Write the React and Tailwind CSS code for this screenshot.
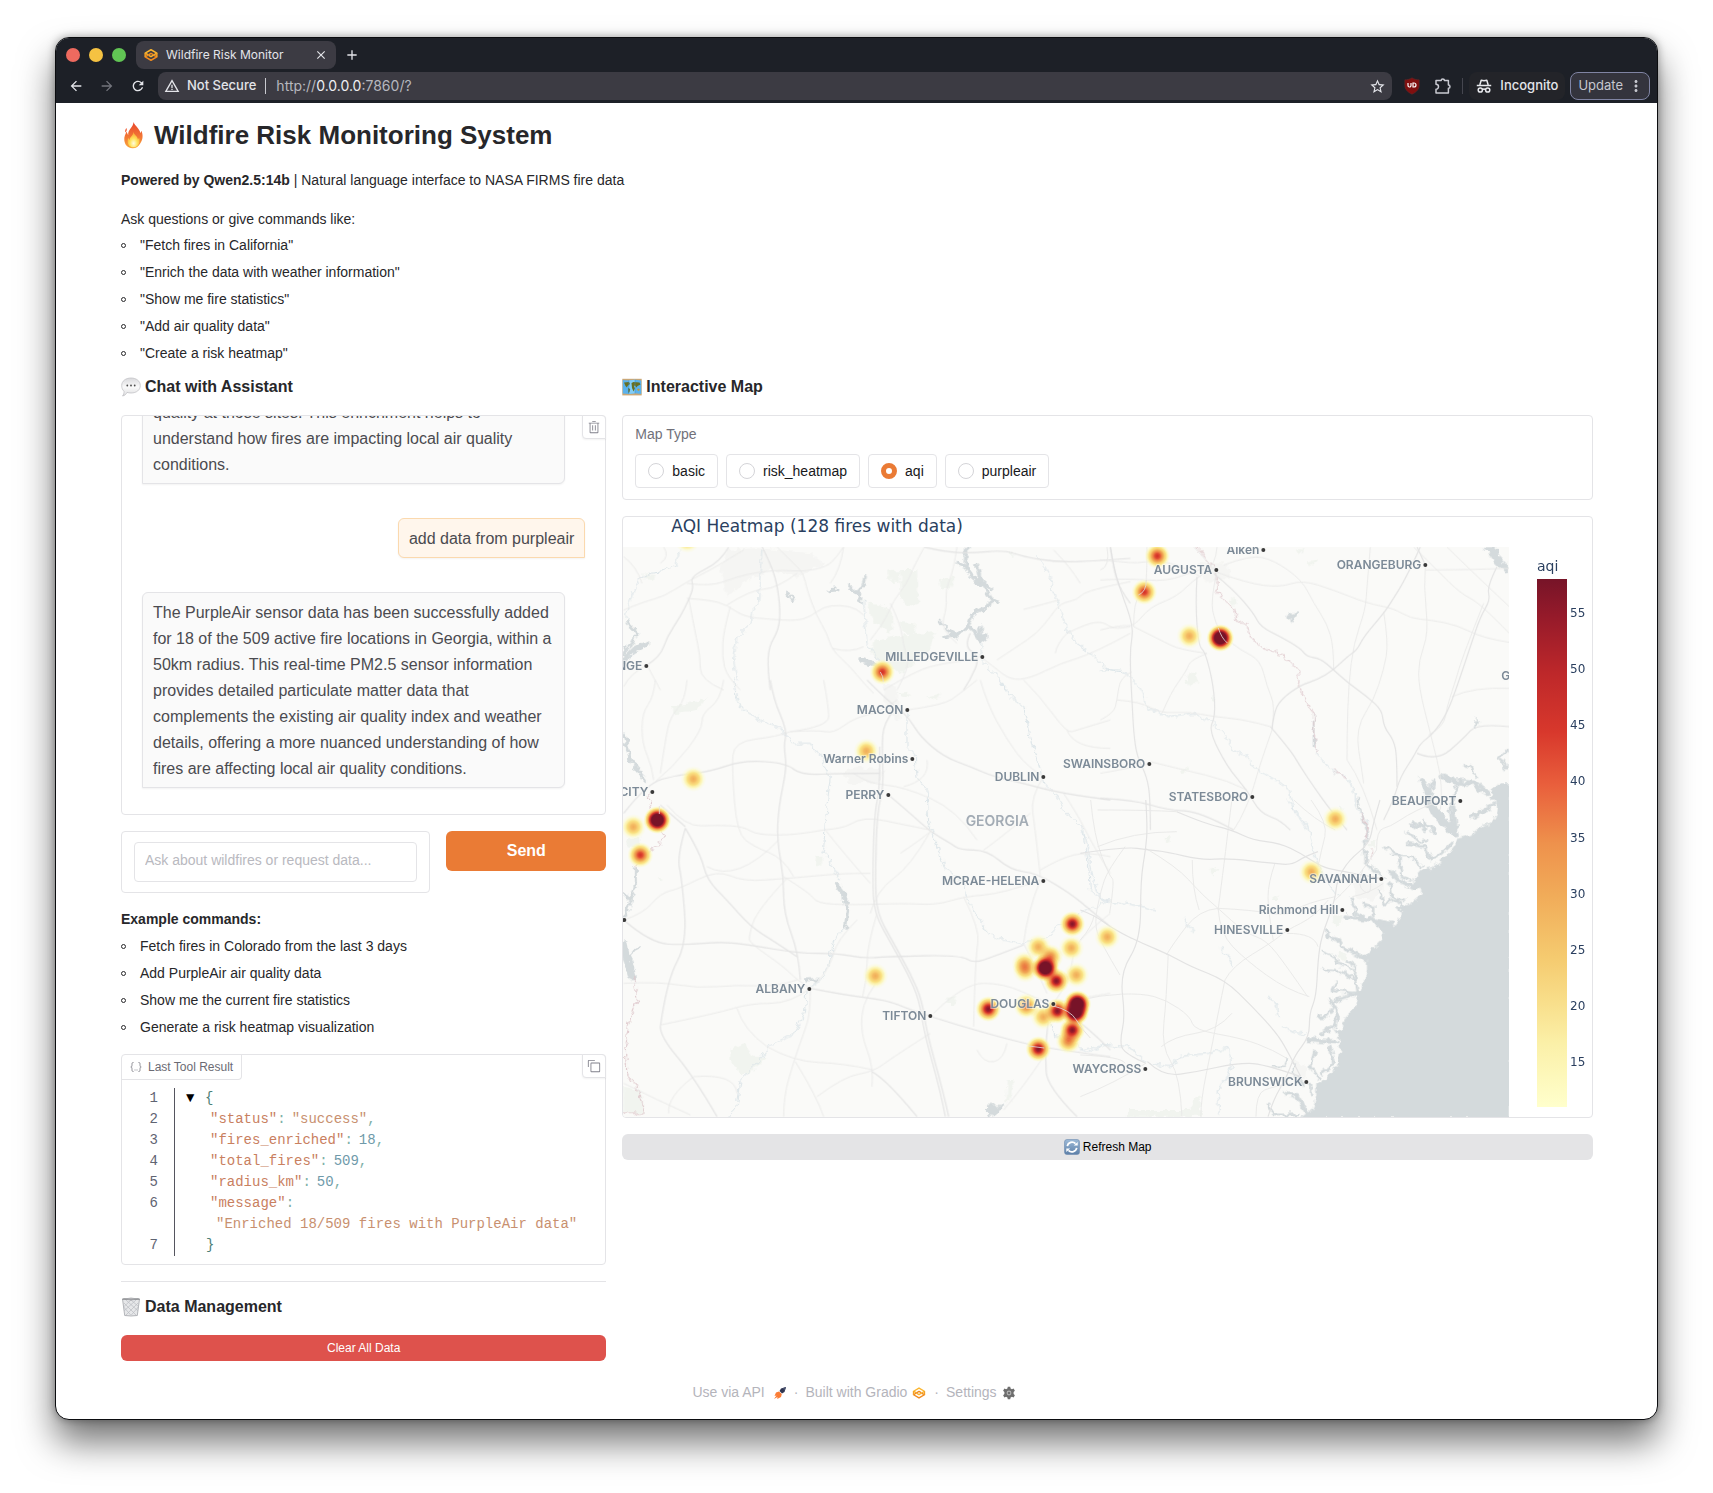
import React, { useState } from "react";
import {
  MdArrowBack,
  MdArrowForward,
  MdRefresh,
  MdWarningAmber,
  MdStarBorder,
  MdMoreVert,
  MdClose,
  MdAdd,
} from "react-icons/md";

/* ---------- icons ---------- */

const FlameIcon = () => (
  <svg viewBox="0 0 24 32" className="h-7 w-[25px] shrink-0" aria-hidden="true">
    <defs>
      <linearGradient id="flameOuter" x1="0" y1="0" x2="0" y2="1">
        <stop offset="0" stopColor="#e8452c" />
        <stop offset="0.6" stopColor="#f37a35" />
        <stop offset="1" stopColor="#f9a83c" />
      </linearGradient>
      <radialGradient id="flameInner" cx="0.5" cy="0.75" r="0.6">
        <stop offset="0" stopColor="#fffbe0" />
        <stop offset="0.5" stopColor="#ffe45e" />
        <stop offset="1" stopColor="#fbb03b" />
      </radialGradient>
    </defs>
    <path d="M12 1c1 4 7 7 8 13l1-3c2 4 2 10-1 14-2 4-5 6-9 6-6 0-9-4-9.500-9C1 18 3 15 4 12c1 2 1 3 2 4C5 10 12 7 12 1z" fill="url(#flameOuter)" />
    <path d="M4 8c-1 1-2 3-1.500 5C4 12 5 10 4 8z" fill="#f0603a" />
    <path d="M12 12c0 4 5 5 5 9l1.500-2c1.500 5-1 11-6.500 11s-8-5-6-11l1.500 3C7.500 18 12 17 12 12z" fill="url(#flameInner)" />
  </svg>
);

const SpeechIcon = () => (
  <svg viewBox="0 0 20 20" className="size-5 shrink-0" aria-hidden="true">
    <defs>
      <linearGradient id="speechFill" x1="0" y1="0" x2="0" y2="1">
        <stop offset="0" stopColor="#d9d9dc" />
        <stop offset="0.5" stopColor="#fafafa" />
        <stop offset="1" stopColor="#dedee0" />
      </linearGradient>
    </defs>
    <path d="M10 1c5.300 0 9.300 3 9.300 7.500S15.500 16 10 16c-1.500 0-2.800-.2-4-.6C5 17.500 3.500 18.600 1.500 19c1.200-1.200 1.600-3 1.500-4.800C1.500 13 .7 11 .7 8.500.7 4 4.700 1 10 1z" fill="url(#speechFill)" stroke="#bcbcc0" strokeWidth="0.7" />
    <circle cx="6.300" cy="8.500" r="0.9" fill="#4a4a4a" />
    <circle cx="10" cy="8.500" r="0.9" fill="#4a4a4a" />
    <circle cx="13.700" cy="8.500" r="0.9" fill="#4a4a4a" />
  </svg>
);

const WorldMapIcon = () => (
  <svg viewBox="0 0 20 18" className="h-[18px] w-5 shrink-0" aria-hidden="true">
    <rect x="0.300" y="0.800" width="19.400" height="16.600" fill="#c9a777" />
    <path d="M.8 2l6 .6 6.200-.8 6.200.8V16l-6.200-.7-6.200.7-6-.6z" fill="#5ab2ec" />
    <path d="M7 2.500l6-.7v13.500l-6 .7z" fill="#83cdf6" />
    <path d="M2 4.500l5-.5 1 2-2.500 2L5 9.500 3.500 8zM6 10l2.200 1-.7 3-1.200 1zM9.500 5l2-1 6 .5 1 2-3 1.500-1 1.500-1.500-2-1 .5 1 2.500-1.500 3-1.500-3.500z" fill="#676f22" />
    <path d="M15 11l2-.5 1 1.500-2 1z" fill="#c09a3a" />
    <path d="M6.900 2.500V16M13 2v13.300" stroke="#3f8cc4" strokeWidth="0.500" />
  </svg>
);

const BasketIcon = () => (
  <svg viewBox="0 0 20 20" className="size-5 shrink-0" aria-hidden="true">
    <path d="M1.500 2h17l-2.200 16.500q-6.300 1-12.600 0z" fill="#e6e7e9" stroke="#a2a5aa" strokeWidth="0.800" />
    <path d="M3 6l12 12M5 3l12 11M10 3l8 7M2.700 10l7 8M17 6L5 18M15 3L3 14M10 3L2.500 10M17.300 10l-7 8" stroke="#b9bcc1" strokeWidth="0.700" />
    <ellipse cx="10" cy="2" rx="9" ry="1.200" fill="#77797d" />
    <ellipse cx="10" cy="1.900" rx="7.600" ry="0.600" fill="#c9cacd" />
  </svg>
);

const SyncBadgeIcon = () => (
  <svg viewBox="0 0 16 16" className="size-4 shrink-0" aria-hidden="true">
    <defs>
      <linearGradient id="syncFill" x1="0" y1="0" x2="0" y2="1">
        <stop offset="0" stopColor="#9dbad8" />
        <stop offset="1" stopColor="#5c7fa8" />
      </linearGradient>
    </defs>
    <rect x="0.500" y="0.500" width="15" height="15" rx="2.500" fill="url(#syncFill)" stroke="#6d8bb0" strokeWidth="0.600" />
    <path d="M3.300 7.200a4.800 4.800 0 0 1 8.200-2.500M12.700 8.800a4.800 4.800 0 0 1-8.200 2.500" fill="none" stroke="#fff" strokeWidth="1.700" />
    <path d="M9.800 6.600h3.900V2.900zM6.200 9.400H2.300v3.700z" fill="#fff" />
  </svg>
);

const GradioIcon = ({ className }) => (
  <svg viewBox="0 0 24 22" className={className} strokeWidth="2.600" strokeLinejoin="round" fill="none" aria-hidden="true">
    <path d="M7 10.500L2 7.800 12 2l10 5.800-10 6-4-2.300" stroke="#fbb52e" />
    <path d="M17 11.500l5 2.700L12 20 2 14.200l10-6 4 2.300" stroke="#f08a1e" />
    <path d="M2 7.800v6.400M22 7.800v6.400" stroke="#f5a024" />
  </svg>
);

const RocketIcon = () => (
  <svg viewBox="0 0 14 14" className="size-3.5 shrink-0" aria-hidden="true">
    <path d="M13 1L8 2.500 6.500 5 9 7.500 11.500 6z" fill="#2f3550" />
    <path d="M6 5.500L3 6.500 1.500 10l2-.5L1 13l3.500-2-.3 2L8 11l.8-3z" fill="#fb7d36" />
    <path d="M13 1L9.500 2.200 11.800 4.500z" fill="#4a5270" />
  </svg>
);

const GearIcon = () => (
  <svg viewBox="0 0 14 14" className="size-3.5 shrink-0" aria-hidden="true">
    <path
      d="M5.800.8h2.400l.4 1.700 1.300.7 1.700-.6 1.300 2.100-1.300 1.200v2.200l1.300 1.200-1.300 2.100-1.700-.6-1.300.7-.4 1.700H5.800l-.4-1.700-1.300-.7-1.700.6-1.300-2.100 1.300-1.200V5.900L1.100 4.700l1.300-2.100 1.700.6 1.300-.7z"
      fill="#6e6e6e"
    />
    <circle cx="7" cy="7" r="2.400" fill="#b5b5b5" />
    <circle cx="7" cy="7" r="1.300" fill="#6e6e6e" />
  </svg>
);

const TrashIcon = () => (
  <svg viewBox="0 0 32 32" className="size-3.5" fill="currentColor" aria-hidden="true">
    <path d="M12 12h2v12h-2zM18 12h2v12h-2zM4 6v2h2v20a2 2 0 0 0 2 2h16a2 2 0 0 0 2-2V8h2V6zm4 22V8h16v20zM12 2h8v2h-8z" />
  </svg>
);

const CopyIcon = () => (
  <svg viewBox="0 0 32 32" className="size-3.5" fill="currentColor" aria-hidden="true">
    <path d="M28 10v18H10V10h18m0-2H10a2 2 0 0 0-2 2v18a2 2 0 0 0 2 2h18a2 2 0 0 0 2-2V10a2 2 0 0 0-2-2Z" />
    <path d="M4 18H2V4a2 2 0 0 1 2-2h14v2H4Z" />
  </svg>
);

const BracesIcon = () => (
  <svg viewBox="0 0 12 12" className="size-3 shrink-0" fill="none" stroke="#8a8a92" aria-hidden="true">
    <path d="M3.500 1.500c-1.500 0-1.500.5-1.500 2S1.700 6 .8 6c.9 0 1.200 1 1.200 2.500s0 2 1.500 2M8.500 1.500c1.500 0 1.500.5 1.500 2S10.300 6 11.200 6c-.9 0-1.200 1-1.200 2.500s0 2-1.500 2" />
    <path d="M4.500 9h1M6.500 9h1" />
  </svg>
);

const IncognitoIcon = () => (
  <svg viewBox="0 0 16 16" className="size-4" fill="none" stroke="#e8e9ed" strokeWidth="1.500" aria-hidden="true">
    <path d="M3.800 7L5.200 2.200l2.800.6 2.800-.6L12.200 7" strokeLinejoin="round" />
    <path d="M.8 7.500h14.400" />
    <circle cx="4.300" cy="12" r="2.100" />
    <circle cx="11.700" cy="12" r="2.100" />
    <path d="M6.300 11.500q1.700-1 3.400 0" />
  </svg>
);

const PuzzleIcon = () => (
  <svg viewBox="0 0 18 18" className="size-[18px]" fill="none" stroke="#c9cad2" strokeWidth="1.500" strokeLinejoin="round" aria-hidden="true">
    <path d="M2 3.500h5.200a1.600 1.600 0 0 1 3.200 0h4v4.600a1.600 1.600 0 0 1 0 3.200V16H2v-3.800a2.500 2.500 0 0 0 0-5z" />
  </svg>
);

const ShieldIcon = () => (
  <svg viewBox="0 0 16 18" className="h-[18px] w-4" aria-hidden="true">
    <path d="M8 .8c2 1.400 4.600 2 7.200 2v5.400c0 4-2.600 7-7.200 9-4.600-2-7.200-5-7.200-9V2.800c2.600 0 5.200-.6 7.200-2z" fill="#800f0f" stroke="#5c2a2c" strokeWidth="0.600" />
    <path d="M4 6v2.500a1.500 1.500 0 0 0 3 0V6M9 6v4h1a2 2 0 0 0 0-4z" fill="none" stroke="#fff" strokeWidth="1.200" />
  </svg>
);

/* ---------- map drawing ---------- */

function smooth(line) {
  const p = line.split(" ").map((s) => s.split(",").map(Number));
  if (p.length < 3) return "M" + line.replace(" ", "L");
  let d = `M${p[0]}`;
  for (let i = 1; i < p.length - 1; i++) {
    const end = i === p.length - 2 ? p[i + 1] : [(p[i][0] + p[i + 1][0]) / 2, (p[i][1] + p[i + 1][1]) / 2];
    d += `Q${p[i]} ${end}`;
  }
  return d;
}

const tiles = [
  {
    place: "translate(610 370) scale(0.3333)",
    roads: [
      "40,720 100,695 160,680 230,635 300,600 350,570 400,540",
      "230,640 300,650 380,620 450,605 520,600 580,605 650,590 680,560 700,530",
      "500,531 550,580 580,610 590,660 620,740 650,790 665,840 720,890 760,940 790,970",
      "235,685 255,790 270,860 270,930 340,960",
      "230,685 300,690 350,705 400,740 480,748 560,752 600,740 640,710 690,705 740,715 760,735",
      "360,710 340,780 335,860 350,920 390,960",
      "350,705 420,660 500,655 560,610",
      "700,531 690,600 660,640",
      "940,535 910,590 890,640 850,690 820,760 780,810",
      "1040,531 1030,600 1005,660 1010,710 990,780 1040,820",
      "840,700 870,760 880,830 900,890 860,960",
      "1160,870 1220,830 1280,790 1320,740 1350,700 1400,690 1430,660 1560,635",
      "1110,860 1150,890 1200,930 1260,925 1350,880 1450,850 1560,790",
      "1240,718 1310,700 1345,690",
      "1370,790 1430,760 1480,755 1510,780 1560,770",
      "1370,790 1340,820 1335,850",
      "1330,540 1380,590 1410,640",
      "40,560 80,590 95,640",
      "160,531 180,560 150,580",
      "110,885 60,910 40,950",
      "820,960 920,900 1000,880 1080,870 1110,860",
      "665,835 720,850 760,830",
      "110,885 150,960",
    ],
    mains: [
      "455,530 480,580 500,640 510,720 505,780 475,830 472,900 480,960",
      "110,885 150,860 170,800 210,740 235,690 250,650 240,620 330,575 355,531",
      "940,531 1000,545 1080,550 1180,540 1240,560 1330,575 1430,575 1560,565",
      "1500,531 1510,600 1530,660 1560,700",
      "1080,790 1060,830 1110,860 1080,930 1060,960",
    ],
    rivers: [
      "210,540 195,580 160,605 120,610 85,630 70,660 55,700 45,740 60,770 85,790",
      "455,540 450,600 445,700 425,720 420,760 380,800 370,870 380,930",
      "1280,560 1320,620 1325,660 1345,700 1370,780 1400,820 1440,850 1490,900 1540,910",
      "760,690 765,760 770,820 800,860 815,900",
      "1110,810 1115,870 1160,920 1190,960",
    ],
    water: [
      [11, "1070,531 1065,580 1085,620 1120,650 1145,690 1140,705 1090,730 1070,770 1040,800 1010,780"],
      [9, "1040,580 1065,590"], [12, "1100,590 1110,630 1140,655"], [7, "1145,690 1165,695"],
      [14, "1070,770 1090,780 1110,810 1125,800"], [9, "1110,770 1112,805"], [9, "1000,800 1040,795"], [7, "990,755 1015,785"],
      [9, "765,620 755,650 735,670 755,695"], [9, "715,645 745,670"], [9, "530,670 550,690"], [9, "655,662 680,660"],
      [12, "750,870 800,885"], [8, "50,760 80,790 60,830 40,850"], [14, "110,820 70,840 40,870"], [8, "45,830 40,890"],
    ],
    parks: [
      "870,600 920,600 925,700 890,710 870,680", "830,605 870,600 865,635 840,635",
      "790,810 850,800 980,785 950,850 870,910 830,890 780,850",
      "770,700 830,710 850,750 840,790 790,760", "985,635 1030,620 1020,655 990,660",
      "870,755 910,760 920,795 880,790", "100,610 135,615 130,630 100,628", "1190,545 1215,545 1205,562",
    ],
    urban: ["350,540 440,535 600,550 640,580 560,620 480,600 400,640 350,680 330,600"],
    border: [],
  },
  {
    place: "translate(1100 500) scale(0.3333)",
    roads: [
      "0,180 60,185 110,190 170,180 250,200 300,230",
      "0,240 80,235 200,245 290,210 345,200 350,141",
      "0,390 60,375 100,380 150,320 230,290 290,230 345,200",
      "100,380 180,420 240,450 320,460",
      "350,215 330,300 345,370 370,410 420,450 480,480 500,560 525,620 515,680",
      "345,215 440,250 540,262 605,240 700,270 800,310 880,325 930,355 990,360 1070,375 1150,415 1227,427",
      "370,195 450,165 520,180 605,240 640,310 680,370 700,440 700,510",
      "810,141 800,260 795,330 760,430 745,550 740,700 740,780",
      "740,780 790,850 830,990",
      "975,195 970,260 985,400 955,480 955,560 990,700 1010,780",
      "975,210 1100,210 1227,205",
      "940,141 1010,210 1080,280 1140,310 1227,400",
      "1040,141 1120,220 1227,320",
      "1150,310 1090,460 1060,560 1040,620 1030,680 985,705",
      "850,335 865,430 850,510 820,600 780,660 770,720 780,780 790,850",
      "1055,590 1120,560 1227,565",
      "1010,780 1030,860 1020,930",
      "0,660 40,640 50,600 60,530 95,515",
      "50,600 120,605 180,640 260,635 340,650 440,660 510,680",
      "185,640 210,580 260,510 270,480 320,460",
      "515,690 480,790 460,860 450,890 420,960 400,990",
      "150,785 250,810 380,840 440,870",
      "0,820 60,810 150,790",
      "140,141 140,200 135,280 100,300 100,380",
      "20,141 30,200 0,210",
      "345,215 300,160 280,141",
    ],
    mains: [
      "30,141 40,200 60,270 100,380 90,440 90,515 95,600 100,700 110,770 140,830 150,900 150,990",
      "290,230 285,310 295,440 315,455 340,560 345,650 325,690 380,800 440,870 480,940 540,960 570,990",
      "340,220 400,270 460,340 480,380 540,410 600,445 620,470 660,475 700,510 745,550 800,590 845,630 850,680 880,720 890,770 890,860",
      "960,141 920,230 870,310 850,340 790,410 770,450 740,470 700,510 650,540 600,555 540,600 520,640 515,690",
      "510,680 570,750 600,800 640,860 690,930 740,990",
      "1190,200 1160,260 1170,300 1140,350 1110,440 1070,560 1040,640 1000,700 960,730 940,770 900,830 880,900 850,960",
      "1227,680 1130,670 1090,715 1010,785 950,760",
      "0,895 100,900 200,930 300,935 400,990",
      "950,141 975,195",
    ],
    rivers: [
      "0,510 60,510 100,540 130,580 135,620 200,650 280,640 340,670 370,700 400,750 440,770 470,810 530,840 570,870 580,930 620,990",
      "640,640 640,700 650,760 690,810 740,830 765,880 765,920 800,960 805,990",
    ],
    water: [
      [14, "565,352 585,345"], [8, "590,335 580,360"], [8, "1120,665 1135,668"], [7, "1130,655 1128,680"],
      [16, "1025,828 1060,845 1120,850 1160,880"], [20, "965,840 985,880 990,920 1030,960 1060,990"], [10, "1000,840 985,890"],
      [7, "1090,795 1110,800 1130,830"], [7, "1220,750 1195,775 1215,790 1215,810"], [12, "1120,950 1180,910"],
      [12, "940,970 975,990"], [10, "1070,860 1050,930 1060,990"], [6, "640,660 640,740"],
    ],
    parks: ["255,530 280,515 295,550 265,555", "390,300 405,290 410,310 395,315", "335,590 345,590 345,605 335,605", "590,150 610,145 605,160", "625,185 650,175 645,190 630,195", "245,805 265,800 250,825", "715,920 735,925 725,935"],
    urban: ["290,190 380,190 390,230 320,250"],
    border: ["290,141 320,180 350,210 350,270 370,300 405,330 405,360 440,375 450,410 490,445 540,460 595,510 595,560 620,610 640,640 640,700 650,760", "700,810 740,835", "790,950 805,990"],
    poly: ["1150,141 1195,141 1195,165 1227,200 1227,227 1180,185", "1230,855 1195,855 1170,870 1190,900 1190,940 1160,990 1230,990"],
  },
  {
    place: "translate(610 680) scale(0.3333)",
    roads: [
      "135,0 130,50 95,100 95,190 125,260 130,300",
      "230,0 225,60 180,110 165,180 150,280",
      "340,0 330,60 275,100 275,150 190,260 130,310",
      "640,0 655,80 655,140 540,155",
      "540,155 500,170 370,185 365,270 380,460 430,500 520,535 550,590",
      "540,155 620,150 670,160 730,115 810,95 860,60",
      "1110,0 1130,70 1190,180 1250,260 1300,290",
      "890,90 1000,75 1050,40 1100,0",
      "1500,120 1400,150 1370,160 1290,50 1240,0",
      "1500,205 1390,205 1370,150",
      "730,280 770,310 880,320 1040,390 1100,480",
      "1300,290 1260,350 1275,450 1290,590",
      "1260,400 1150,490 1120,510",
      "1500,530 1430,515 1350,535 1290,570",
      "640,450 700,445 740,420 790,415 860,430 960,450",
      "170,375 225,440 320,435 400,440 440,465 560,465 640,450",
      "40,720 100,700 150,640 210,625 320,570 400,605 530,595 590,590 700,580 780,580",
      "520,590 600,640 620,670 720,675 880,670 980,675 1060,650 1180,640 1290,600",
      "530,595 440,690 415,770 420,790 520,860 560,900 600,925",
      "600,925 600,1000 580,1060 550,1145 520,1250 520,1310",
      "600,925 540,970 420,970 320,1000 150,1035",
      "40,910 150,905 260,925 380,915 500,920 560,900",
      "740,720 680,780 660,860 620,910",
      "820,880 760,950 750,1060 790,1160 785,1220",
      "800,700 770,800 770,900 757,950",
      "970,1000 1060,910 1180,910 1290,960 1320,970",
      "1090,1040 1095,830 1110,750 1060,650",
      "470,1100 550,1145 700,1150 790,1170",
      "470,1100 400,1050 380,985",
      "380,1240 375,1180 250,1190",
      "40,1210 140,1260 240,1305",
      "250,1190 170,1250 175,1300",
      "555,1145 620,1250 640,1310",
      "620,1250 700,1190 790,1175 850,1130 960,1060",
      "1300,1130 1240,1220 1180,1290",
      "1240,790 1280,870 1310,940",
      "1290,600 1250,700 1240,790",
      "1500,700 1450,740 1390,800 1380,900 1330,970",
      "1100,1110 1120,1150 1180,1140 1190,1090",
      "960,455 900,560 800,630 780,700",
      "645,450 700,520 780,610",
      "950,240 960,300 880,320",
      "1500,580 1450,500 1400,400 1360,340",
      "1320,970 1380,960 1500,940",
      "870,520 930,480 960,455",
      "505,480 380,610 290,560",
    ],
    mains: [
      "40,400 110,310 200,285 300,275 400,240 530,250 570,285 700,280 810,280",
      "480,0 490,60 530,150 520,200 530,260 505,380 500,480 520,590 520,700 565,820 570,900",
      "770,0 830,60 860,80 900,120 930,170 1000,230 1080,260 1150,290 1240,310 1350,340 1500,360",
      "850,90 820,130 815,200 820,320 800,400 795,600 800,700 850,790 900,880 935,960 950,1060 1000,1240 1015,1310",
      "808,200 810,320 792,400 787,600 792,700 842,790 892,880 927,960 942,1060 992,1240 1005,1310",
      "835,345 900,400 960,455 1020,490 1050,510 1130,510 1200,570 1280,580 1380,640 1440,690 1500,740",
      "225,445 270,520 290,600 350,660 420,740 500,790 560,830",
      "225,445 200,530 215,600 230,790 170,900 150,1040",
      "150,375 225,440",
      "40,720 120,790 230,795 330,785 420,795 565,820 680,820 760,835 830,830 1050,825 1090,850 1150,830 1240,795",
      "600,925 700,945 830,960 900,990 1040,1035 1200,1080 1310,1105 1500,1130",
      "150,1040 150,1070 250,1190 320,1310",
      "785,1175 830,1200 920,1310",
      "1320,975 1310,1050 1305,1130 1310,1220 1400,1310",
      "1330,975 1400,1010 1500,1110",
    ],
    rivers: [
      "370,0 380,60 400,90 450,120 510,145 550,190 600,190 630,230 660,290 645,420 640,510 690,600",
      "1170,0 1200,50 1240,80 1260,180 1290,270 1300,310 1330,340 1370,400 1420,450 1435,560 1440,630 1490,665",
      "890,90 890,200 915,230 920,290 950,330 955,430 975,480 1000,560 1060,610 1065,650 1110,720 1130,760 1180,780 1230,790 1300,780 1340,740 1410,700 1480,670",
      "700,745 670,780 655,860 630,900 590,930 585,1000 550,1060 475,1100 440,1150 390,1200 375,1290 355,1310",
      "1320,990 1330,1070 1380,1080 1430,1120 1500,1090",
    ],
    water: [
      [13, "680,615 700,640 710,690 705,740"], [10, "40,160 50,200 60,240 105,300"], [9, "75,560 75,620 60,660 50,700 40,710"],
      [22, "40,790 48,830 65,890"], [7, "85,800 55,830"], [9, "585,900 620,898"], [8, "40,640 60,660"],
    ],
    parks: ["360,1110 400,1090 430,1130 470,1130 420,1180 390,1180 360,1140", "40,1220 90,1230 105,1300 40,1300", "1190,1200 1210,1200 1200,1270 1185,1270", "45,480 90,470 95,500 60,500", "615,530 640,530 630,560 612,550", "1005,950 1040,945 1030,975 1010,975", "180,80 240,70 290,55 260,90 190,100", "950,50 990,40 980,60", "860,40 890,35 900,55", "140,595 160,595 150,608"],
    urban: ["820,10 860,20 870,120 830,100", "690,280 740,260 830,270 800,310 720,310"],
    border: ["115,340 125,400 130,430 165,470 145,495 120,510 75,560", "70,890 80,960 55,1030 45,1110 50,1190 80,1220 105,1300 40,1300"],
    poly: ["1130,1275 1185,1275 1165,1295 1140,1310 1130,1300"],
  },
  {
    place: "translate(1080 800) scale(0.3444 0.3333)",
    roads: [
      "30,0 40,110 85,230 100,240 85,340",
      "50,30 200,30 280,35",
      "440,0 430,80 420,170 400,330",
      "190,145 280,200 350,280 400,325 480,400 540,420 600,500 660,590",
      "130,140 80,210 60,270 40,370 60,430 115,525",
      "280,95 150,95 50,140",
      "250,465 270,430 345,330 400,325",
      "400,325 405,400 480,480 600,570 665,590",
      "620,0 680,60 740,90",
      "670,0 720,70 700,150 690,200",
      "420,540 400,640 380,750 350,900 350,950",
      "420,540 440,500 560,425 600,390 680,350 720,300",
      "400,325 500,330 600,350 650,310 740,290",
      "0,600 60,585 180,580 250,600 320,650 330,690 470,715 560,750 600,775",
      "255,465 250,600 235,740 290,830 295,950",
      "235,740 270,710 400,690 440,640",
      "190,790 100,850 0,890",
      "860,150 820,210 780,260 740,300",
      "1050,0 1000,20 950,45 900,80 860,90 860,150",
      "565,190 545,250 545,330 560,420",
      "325,180 325,270 345,330",
      "510,950 510,880 560,860 610,850",
      "600,400 680,400 690,440",
      "0,765 120,770 130,790",
      "820,210 800,260 850,290 840,230",
      "740,240 830,240 870,235",
      "790,290 840,280 880,250",
      "40,345 35,380 0,420",
    ],
    mains: [
      "190,0 195,80 190,145 175,240 175,420 115,520 130,650 115,720 125,760 190,790",
      "0,160 130,140 200,150 250,155 350,180 430,175 560,190 615,195 650,170 690,155",
      "280,35 360,70 440,90 500,120 580,130 640,160 700,200 740,210 870,235",
      "0,330 40,345 100,390 180,430 260,465 320,500 420,540 500,620 570,700 600,750 640,830",
      "195,785 240,830 340,815 450,790 530,790 640,830",
      "870,0 850,70 840,130 780,180 745,240 740,300 700,410 690,480 685,590 665,640 665,710 620,770 600,830 560,900 545,950",
    ],
    rivers: [
      "0,85 20,120 30,200 40,250 65,300 130,310 180,320 220,330",
      "600,0 630,40 660,80 680,170 710,230 745,290",
      "405,440 430,470 445,500",
      "300,355 310,380 335,395",
      "545,590 570,620 575,655",
      "590,680 620,695 655,700",
      "0,750 80,735 140,740 190,790 260,800 290,770 370,760 430,745 440,800 400,880 405,950",
    ],
    water: [
      [7, "805,0 820,50 835,100 825,130 825,180 850,210 880,230"], [10, "825,150 835,195 870,225"],
      [24, "1010,10 1040,50 1090,100"], [12, "1082,20 1092,100"], [9, "965,75 1000,85 1000,65 1030,100"],
      [9, "950,130 1000,140 1020,180 1060,150 1075,135"], [7, "905,165 960,170 990,200"], [14, "900,215 930,245 965,262"],
      [8, "870,275 880,310 920,300 940,320"], [8, "790,300 800,340 830,360 880,365"], [14, "770,350 840,360 900,372"],
      [10, "715,390 720,410 750,420 760,440 800,460 825,475"], [6, "700,455 740,470 745,490 800,510"], [7, "705,510 760,515 800,540 805,575"],
      [7, "745,545 730,570 800,580"], [10, "725,600 745,630 740,680 700,700"], [14, "665,720 740,725"], [8, "680,750 670,800 695,840"],
      [8, "725,740 735,790 700,820"], [14, "600,880 630,890 660,940"], [8, "545,915 560,945 630,945"], [6, "560,800 590,800 600,775"],
      [7, "640,850 670,850 670,880"], [7, "925,185 935,230 960,240"], [12, "1140,50 1190,25"], [7, "880,140 930,165 930,200"],
      [7, "900,250 905,290 940,300"], [7, "770,480 800,500 795,540"], [8, "690,650 720,650 740,600 780,590"], [7, "620,790 620,830 650,850"],
      [8, "850,350 850,320 820,310"], [7, "950,95 985,125 1010,120"],
    ],
    parks: ["135,930 350,930 350,950 135,950", "320,920 335,890 350,900 350,930 320,930", "735,350 760,340 760,370 740,385", "380,205 390,198 400,212 385,230", "245,110 260,105 262,125 250,130", "555,300 575,285 570,300", "750,455 770,460 765,480 750,475", "840,120 860,120 855,145 840,140"],
    urban: ["790,250 880,245 880,270 850,300 800,290", "620,780 660,800 650,840 625,830"],
    border: ["815,40 835,80 830,110", "845,150 845,175"],
    poly: [
      "1250,-50 1215,-50 1190,-10 1215,15 1200,65 1170,75 1130,105 1100,112 1084,140 1060,170 1020,205 990,210 965,240 960,262 990,268 988,285 960,310 915,325 937,342 912,374 860,372 885,400 870,425 830,465 790,465 832,485 832,515 815,570 760,585 806,592 800,620 770,650 755,690 735,690 750,715 755,750 748,795 720,820 700,852 685,850 685,880 675,930 640,955 1250,955",
    ],
  },
];

// x, y, strength (1 faint .. 5 saturated)
const hotspots = [
  [687, 540, 1], [882, 672, 3], [1157, 556, 3], [1144, 592, 3], [1189, 636, 1], [1220, 638, 5], [1335, 819, 1],
  [866, 751, 1], [693, 779, 1], [657, 820, 5], [633, 827, 1], [640, 855, 3], [1072, 924, 4], [1107, 937, 1],
  [1038, 947, 1], [1071, 948, 1], [1024, 964, 1], [1025, 970, 1], [1045, 968, 5], [1050, 957, 2], [1056, 981, 4],
  [1076, 975, 1], [875, 976, 1], [988, 1009, 4], [1026, 1006, 2], [1043, 1017, 1], [1057, 1011, 4], [1077, 1004, 5],
  [1075, 1012, 5], [1072, 1030, 4], [1068, 1041, 2], [1038, 1049, 4], [1311, 872, 1],
];

const cities = [
  ["NGE", 646, 666], ["MILLEDGEVILLE", 982, 657], ["AUGUSTA", 1216, 570], ["Aiken", 1263, 550], ["ORANGEBURG", 1425, 565],
  ["SWAINSBORO", 1149, 764], ["STATESBORO", 1252, 797], ["BEAUFORT", 1460, 801], ["MACON", 907, 710], ["Warner Robins", 912, 759],
  ["PERRY", 888, 795], ["DUBLIN", 1043, 777], ["CITY", 652, 792], ["MCRAE-HELENA", 1043, 881], ["TIFTON", 930, 1016],
  ["ALBANY", 809, 989], ["DOUGLAS", 1053, 1004], ["WAYCROSS", 1145, 1069], ["SAVANNAH", 1381, 879], ["Richmond Hill", 1342, 910],
  ["HINESVILLE", 1287, 930], ["BRUNSWICK", 1306, 1082], ["", 624, 920],
];

const heat = [
  [1, 0.4], [2, 0.55], [3, 0.74], [4, 0.96],
];

function HeatMap() {
  return (
    <svg viewBox="622 547 887 570" preserveAspectRatio="xMidYMid slice" className="h-[570px] min-w-0 flex-1 bg-[#fafaf8]" role="img" aria-label="AQI heatmap of Georgia">
      <defs>
        {heat.map(([k, a]) => (
          <radialGradient key={k} id={`heat${k}`}>
            <stop offset="0" stopOpacity={a} />
            <stop offset="0.2" stopOpacity={a * 0.88} />
            <stop offset="0.4" stopOpacity={a * 0.62} />
            <stop offset="0.6" stopOpacity={a * 0.33} />
            <stop offset="0.8" stopOpacity={a * 0.12} />
            <stop offset="1" stopOpacity="0" />
          </radialGradient>
        ))}
        <radialGradient id="heat5">
          <stop offset="0" stopOpacity="1" />
          <stop offset="0.4" stopOpacity="1" />
          <stop offset="0.55" stopOpacity="0.72" />
          <stop offset="0.7" stopOpacity="0.38" />
          <stop offset="0.85" stopOpacity="0.12" />
          <stop offset="1" stopOpacity="0" />
        </radialGradient>
        <filter id="palette" filterUnits="userSpaceOnUse" x="622" y="547" width="887" height="570" colorInterpolationFilters="sRGB">
          <feColorMatrix values="0 0 0 1 0  0 0 0 1 0  0 0 0 1 0  0 0 0 1 0" />
          <feComponentTransfer>
            <feFuncR type="table" tableValues="1 0.99 0.98 0.97 0.945 0.93 0.91 0.85 0.745 0.58 0.467" />
            <feFuncG type="table" tableValues="1 0.96 0.89 0.8 0.68 0.56 0.4 0.23 0.157 0.1 0.078" />
            <feFuncB type="table" tableValues="0.8 0.65 0.52 0.44 0.35 0.29 0.24 0.17 0.165 0.165 0.157" />
            <feFuncA type="table" tableValues="0 0.7 1 1 1 1 1 1 1 1 1" />
          </feComponentTransfer>
        </filter>
        <filter id="ragged" filterUnits="userSpaceOnUse" x="600" y="500" width="930" height="640">
          <feTurbulence type="fractalNoise" baseFrequency="0.16" numOctaves="2" seed="4" />
          <feDisplacementMap in="SourceGraphic" scale="8" xChannelSelector="R" yChannelSelector="G" />
        </filter>
      </defs>
      <g filter="url(#ragged)" fill="#f1f4ef">
        {tiles.map((t, i) => (
          <g key={i} transform={t.place}>
            {t.urban.map((p) => <polygon key={p} points={p} fill="#f5f5f3" />)}
            {t.parks.map((p) => <polygon key={p} points={p} />)}
          </g>
        ))}
      </g>
      <g filter="url(#ragged)" fill="none" strokeLinecap="round" strokeLinejoin="round">
        {tiles.map((t, i) => (
          <g key={i} transform={t.place}>
            {t.rivers.map((p) => <polyline key={p} points={p} stroke="#dbe4e8" strokeWidth="3" />)}
            {(t.poly || []).map((p) => <polygon key={p} points={p} fill="#d4dadc" />)}
            {t.water.map(([w, p]) => <polyline key={p} points={p} stroke="#d4dadc" strokeWidth={w} />)}
            {t.border.map((p) => <polyline key={p} points={p} stroke="#dfc9cd" strokeWidth="3.500" strokeDasharray="9 5" />)}
          </g>
        ))}
      </g>
      <g fill="none" stroke="#e9e9e8">
        {tiles.map((t, i) => (
          <g key={i} transform={t.place}>
            {t.roads.map((p) => <path key={p} d={smooth(p)} strokeWidth="2.800" />)}
            {t.mains.map((p) => <path key={p} d={smooth(p)} strokeWidth="3.500" stroke="#e3e3e3" />)}
          </g>
        ))}
      </g>
      <g filter="url(#palette)">
        {hotspots.map(([x, y, k], i) => (
          <circle key={i} cx={x} cy={y} r={k === 5 ? 14 : 13} fill={`url(#heat${k})`} />
        ))}
      </g>
      <g fill="none" stroke="#e3dedd" strokeOpacity="0.8">
        <path d="M1053 1006Q1070 1010 1076 1020T1090 1038" />
        <path d="M1218 628Q1221 638 1227 643M1146 580Q1146 592 1138 595M880 672Q883 676 883 682M659 806V814M1028 1046L1044 1048" />
      </g>
      <g fontFamily="Inter, sans-serif" fontSize="12" fontWeight="600" fill="#7c8a97" stroke="#fafaf8" strokeWidth="2" strokeOpacity="0.5" paintOrder="stroke" textAnchor="end">
        {cities.map(([name, x, y]) => (
          <g key={name + x}>
            <text x={x - 4} y={y + 4}>{name}</text>
            <circle cx={x} cy={y} r="2" fill="#3a3a3a" />
          </g>
        ))}
        <text x="1501" y="680" textAnchor="start">G</text>
        <text x="997" y="826" fontSize="14" fontWeight="600" fill="#a3acb5" textAnchor="middle">GEORGIA</text>
      </g>
    </svg>
  );
}

/* ---------- building blocks ---------- */

function BulletList({ items }) {
  return (
    <ul className="flex flex-col gap-1.5">
      {items.map((t) => (
        <li key={t} className="flex items-center gap-3.5">
          <span className="size-[5px] rounded-full border border-[#27272a]" />
          {t}
        </li>
      ))}
    </ul>
  );
}

function SectionTitle({ icon, children }) {
  return (
    <h3 className="flex items-center gap-1 text-base leading-6 font-bold">
      {icon}
      {children}
    </h3>
  );
}

const Key = ({ children }) => <span className="text-[#c9805f]">{children}</span>;
const Str = ({ children }) => <span className="text-[#c8906f]">{children}</span>;
const Punc = ({ children }) => <span className="text-[#7fb0a8]">{children}</span>;
const Num = ({ children }) => <span className="text-[#6f9aaa]">{children}</span>;

const pair = (key, value) => (
  <span className="pl-6">
    <Key>"{key}"</Key>
    <Punc>:</Punc>
    <span className="ml-1.5">{value}</span>
    <Punc>,</Punc>
  </span>
);

const codeLines = [
  ["1", <><span className="inline-block w-[19px] text-black">▼</span><span className="text-[#4d8076]">{"{"}</span></>],
  ["2", pair("status", <Str>"success"</Str>)],
  ["3", pair("fires_enriched", <Num>18</Num>)],
  ["4", pair("total_fires", <Num>509</Num>)],
  ["5", pair("radius_km", <Num>50</Num>)],
  ["6", <span className="pl-6"><Key>"message"</Key><Punc>:</Punc></span>],
  ["", <span className="pl-[30px]"><Str>"Enriched 18/509 fires with PurpleAir data"</Str></span>],
  ["7", <span className="pl-5 text-[#4d8076]">{"}"}</span>],
];

const panel = "rounded-sm border border-[#e4e4e7] bg-white";
const cornerButton = "absolute -top-px -right-px flex size-6 items-center justify-center rounded-tr-sm rounded-bl-sm border border-[#e4e4e7] bg-white text-[#80808a] shadow-xs";

function Chrome() {
  return (
    <header className="bg-[#1d2027] font-['Inter',sans-serif] text-[#e3e4e9]">
      <div className="flex h-[34px] items-center pl-2.5">
        <div className="flex gap-[9px]">
          <span className="size-3.5 rounded-full bg-[#ee6a5f]" />
          <span className="size-3.5 rounded-full bg-[#f5c242]" />
          <span className="size-3.5 rounded-full bg-[#61c554]" />
        </div>
        <div className="ml-2.5 flex h-7 w-[200px] items-center rounded-lg bg-[#3c3b43] px-2">
          <GradioIcon className="h-3.5 w-3.5" />
          <span className="ml-2 flex-1 text-xs">Wildfire Risk Monitor</span>
          <button type="button" aria-label="Close tab"><MdClose className="size-3.5" /></button>
        </div>
        <button type="button" aria-label="New tab" className="ml-2"><MdAdd className="size-4" /></button>
      </div>
      <div className="flex h-[31px] items-start pr-[7px] pl-3">
        <div className="flex h-7 items-center gap-[15px]">
          <button type="button" aria-label="Back"><MdArrowBack className="size-4" /></button>
          <button type="button" aria-label="Forward"><MdArrowForward className="size-4 text-[#73747c]" /></button>
          <button type="button" aria-label="Reload"><MdRefresh className="size-4" /></button>
        </div>
        <div className="ml-3 flex h-7 flex-1 items-center rounded-lg bg-[#3c3b43] px-1.5">
          <MdWarningAmber className="size-4" />
          <span className="ml-[7px] text-[13px] font-medium">Not Secure</span>
          <span className="mr-2.5 ml-[9px] h-4 w-px bg-[#c9cad0]" />
          <div className="flex-1 text-sm text-[#b6b7be]">
            http://<span className="text-[#eeeef2]">0.0.0.0</span>:7860/?
          </div>
          <button type="button" aria-label="Bookmark"><MdStarBorder className="size-[17px]" /></button>
        </div>
        <div className="flex h-7 items-center">
          <span className="ml-3"><ShieldIcon /></span>
          <span className="ml-3.5"><PuzzleIcon /></span>
          <span className="ml-2.5 h-4 w-px bg-[#45464f]" />
          <span className="ml-1.5 flex h-7 items-center gap-2 rounded-lg bg-[#232429] px-[7px] text-[13px] font-medium">
            <IncognitoIcon />
            Incognito
          </span>
          <button type="button" className="ml-[5px] flex h-7 items-center gap-1 rounded-lg border border-[#8084a3] bg-[#34343d] pr-1 pl-[7px] text-[13px] text-[#c6c7cf]">
            Update
            <MdMoreVert className="size-[18px]" />
          </button>
        </div>
      </div>
    </header>
  );
}

const bubble = "shrink-0 rounded-md border px-2.5 pt-[7px] pb-[5px] text-base leading-[26px] text-[#4b4b50] shadow-xs";

function ChatColumn() {
  return (
    <div className="flex min-w-0 flex-col gap-4">
      <SectionTitle icon={<SpeechIcon />}>Chat with Assistant</SectionTitle>
      <div className={`relative h-[400px] ${panel}`}>
        <div className="flex h-full flex-col justify-end gap-[34px] overflow-hidden px-5 pb-[26px]">
          <p className={`mr-5 rounded-bl-none border-[#e4e4e7] bg-[#fafafa] ${bubble}`}>
            quality at those sites. This enrichment helps to understand how fires are impacting local air quality conditions.
          </p>
          <p className={`self-end rounded-br-none border-[#fbd9ae] bg-[#fff6ec] ${bubble}`}>add data from purpleair</p>
          <p className={`mr-5 rounded-bl-none border-[#e4e4e7] bg-[#fafafa] ${bubble}`}>
            The PurpleAir sensor data has been successfully added for 18 of the 509 active fire locations in Georgia, within a 50km radius. This real-time PM2.5 sensor information provides detailed particulate matter data that complements the existing air quality index and weather details, offering a more nuanced understanding of how fires are affecting local air quality conditions.
          </p>
        </div>
        <button type="button" aria-label="Clear chat" className={cornerButton}><TrashIcon /></button>
      </div>

      <form className="flex items-start gap-4" onSubmit={(e) => e.preventDefault()}>
        <div className={`min-w-0 flex-1 px-3 py-2.5 ${panel}`}>
          <input type="text" aria-label="Message" placeholder="Ask about wildfires or request data..." className="block h-10 w-full rounded-sm border border-[#e4e4e7] px-2.5 pb-1 text-sm placeholder:text-[#b9b9c0]" />
        </div>
        <button type="submit" className="h-10 w-40 rounded-md bg-[#ea7b35] text-base font-bold text-white">Send</button>
      </form>

      <div className="flex flex-col gap-1.5">
        <p className="font-bold">Example commands:</p>
        <BulletList items={["Fetch fires in Colorado from the last 3 days", "Add PurpleAir air quality data", "Show me the current fire statistics", "Generate a risk heatmap visualization"]} />
      </div>

      <div className={`relative ${panel}`}>
        <div className="flex">
          <div className="flex h-[25px] items-center gap-1.5 rounded-br-sm border-r border-b border-[#e4e4e7] px-2 text-xs text-[#6b6b74]">
            <BracesIcon />
            Last Tool Result
          </div>
        </div>
        <button type="button" aria-label="Copy" className={cornerButton}><CopyIcon /></button>
        <div className="py-2 font-['Liberation_Mono',monospace] text-sm leading-[21px]">
          {codeLines.map(([n, body], i) => (
            <div key={i} className="flex h-[21px]">
              <span className="w-[53px] border-r border-[#55555f] pr-4 text-right text-[#5f6472]">{n}</span>
              <span className="pl-[11px] whitespace-nowrap">{body}</span>
            </div>
          ))}
        </div>
      </div>

      <hr className="border-[#e4e4e7]" />
      <div className="-mt-[3px]"><SectionTitle icon={<BasketIcon />}>Data Management</SectionTitle></div>
      <button type="button" className="h-[26px] rounded-md bg-[#de524c] text-xs text-white">Clear All Data</button>
    </div>
  );
}

function MapColumn() {
  const [type, setType] = useState("aqi");
  return (
    <div className="flex min-w-0 flex-col gap-4">
      <SectionTitle icon={<WorldMapIcon />}>Interactive Map</SectionTitle>
      <fieldset className={`px-3 pt-2 pb-[11px] ${panel}`}>
        <legend className="float-left w-full text-[#71717a]">Map Type</legend>
        <div className="clear-both flex gap-2 pt-[9px]">
          {["basic", "risk_heatmap", "aqi", "purpleair"].map((m) => (
            <label key={m} className="flex h-[34px] items-center gap-2 rounded-sm border border-[#e4e4e7] px-3 text-[#18181b]">
              <input
                type="radio"
                name="map-type"
                checked={type === m}
                onChange={() => setType(m)}
                className="size-4 appearance-none rounded-full border border-[#d4d4d8] bg-white checked:border-[5px] checked:border-[#ea7b35]"
              />
              {m}
            </label>
          ))}
        </div>
      </fieldset>

      <section className={`overflow-hidden font-['DejaVu_Sans',sans-serif] text-[#2a3f5f] ${panel}`}>
        <h4 className="h-[30px] pl-12 text-[17px] leading-[18px]">AQI Heatmap (128 fires with data)</h4>
        <div className="flex">
          <HeatMap />
          <div className="flex w-[83px] flex-col pt-2.5 pb-2.5 pl-7">
            <span className="h-[22px] text-sm leading-[18px]">aqi</span>
            <div className="flex flex-1 gap-[3px]">
              <div className="w-[30px] bg-[linear-gradient(to_top,#ffffcc_0%,#fbf0a8_12%,#f8de8a_20%,#f5cb70_28%,#f1ac59_40%,#ee914c_50%,#e95f3c_61%,#d8382c_71%,#be282a_82%,#951a2a_93%,#771428_100%)]" />
              <div className="flex flex-col justify-between pt-[25px] pb-9 text-xs leading-[18px]">
                {[55, 50, 45, 40, 35, 30, 25, 20, 15].map((n) => <span key={n}>{n}</span>)}
              </div>
            </div>
          </div>
        </div>
      </section>

      <button type="button" className="flex h-[26px] items-center justify-center gap-[3px] rounded-md bg-[#e4e4e6] text-xs text-black">
        <SyncBadgeIcon />
        Refresh Map
      </button>
    </div>
  );
}

export default function App() {
  return (
    <div className="min-h-screen bg-white px-[55px] pt-[37px] pb-[73px]">
      <div className="overflow-hidden rounded-[14px] border border-[#0b0c0f] bg-white shadow-[0_22px_36px_rgba(0,0,0,0.55),0_0_8px_rgba(0,0,0,0.35)]">
        <Chrome />
        <main className="pt-[15px] pr-16 pb-4 pl-[65px] font-['Liberation_Sans',Arial,sans-serif] text-sm leading-[21px] text-[#27272a]">
          <h1 className="flex items-center gap-2 text-[26px] leading-[34px] font-bold">
            <FlameIcon />
            Wildfire Risk Monitoring System
          </h1>
          <p className="mt-[18px]"><strong>Powered by Qwen2.5:14b</strong> | Natural language interface to NASA FIRMS fire data</p>
          <p className="mt-[18px] mb-[5px]">Ask questions or give commands like:</p>
          <BulletList items={['"Fetch fires in California"', '"Enrich the data with weather information"', '"Show me fire statistics"', '"Add air quality data"', '"Create a risk heatmap"']} />

          <div className="mt-[11px] grid grid-cols-[1fr_2fr] items-start gap-4">
            <ChatColumn />
            <MapColumn />
          </div>

          <footer className="mt-[21px] flex items-center justify-center pr-1.5 text-[#b4b4bb]">
            <a href="#api" className="flex items-center gap-2">Use via API <RocketIcon /></a>
            <span className="mx-[7px]">·</span>
            <a href="#gradio" className="flex items-center gap-[5px]">Built with Gradio <GradioIcon className="h-3 w-3.5" /></a>
            <span className="mr-[7px] ml-2">·</span>
            <a href="#settings" className="flex items-center gap-[5px]">Settings <GearIcon /></a>
          </footer>
        </main>
      </div>
    </div>
  );
}
